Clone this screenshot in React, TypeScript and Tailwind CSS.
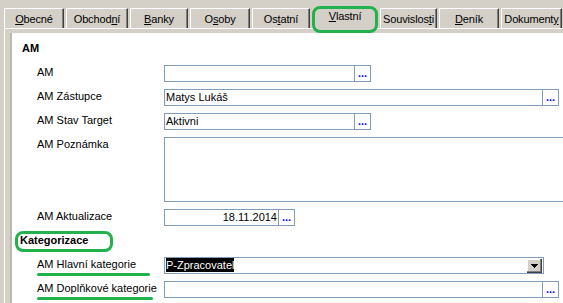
import React from 'react';

type TabDef = { w: number; text: string; u: number; selected?: boolean };

const tabs: TabDef[] = [
  { w: 60, text: 'Obecné', u: 0 },
  { w: 62, text: 'Obchodní', u: 6 },
  { w: 58, text: 'Banky', u: 0 },
  { w: 60, text: 'Osoby', u: 1 },
  { w: 58, text: 'Ostatní', u: 2 },
  { w: 66, text: 'Vlastní', u: 0, selected: true },
  { w: 57, text: 'Souvislosti', u: 9 },
  { w: 60, text: 'Deník', u: 0 },
  { w: 61, text: 'Dokumenty', u: 8 },
];

function Label({ t }: { t: TabDef }) {
  return (
    <span className="whitespace-nowrap tracking-[-0.15px]">
      {t.text.slice(0, t.u)}
      <u className="underline-offset-[1px]">{t.text[t.u]}</u>
      {t.text.slice(t.u + 1)}
    </span>
  );
}

function Tab({ t }: { t: TabDef }) {
  if (t.selected) {
    return (
      <div
        className="relative z-10 -mt-[2px] h-[27px] shrink-0 rounded-[8px] border-[3px] border-[#22b14c] bg-[#d4d0c8] text-center leading-[14px]"
        style={{ width: t.w }}
      >
        <Label t={t} />
      </div>
    );
  }
  return (
    <div
      className="flex h-[20px] shrink-0 items-center justify-center border-l border-t border-r border-l-white border-t-white border-r-[#404040] bg-[#d4d0c8] pt-[1px] leading-[14px] shadow-[inset_-1px_0_#808080]"
      style={{ width: t.w }}
    >
      <Label t={t} />
    </div>
  );
}

function Dots() {
  return (
    <div className="w-[16px] shrink-0 border-l border-[#7f9db9] text-center font-bold leading-[15px] text-[#0000ff]">
      ...
    </div>
  );
}

function Field({
  w,
  children,
  dots,
  right,
  combo,
}: {
  w: number;
  children?: React.ReactNode;
  dots?: boolean;
  right?: boolean;
  combo?: boolean;
}) {
  return (
    <div className="flex h-[17px] shrink-0 border border-[#7f9db9] bg-white" style={{ width: w }}>
      <div
        className={
          right
            ? 'flex-1 overflow-hidden whitespace-nowrap pr-[1px] text-right leading-[15px]'
            : 'flex-1 overflow-hidden whitespace-nowrap pl-[1px] leading-[15px]'
        }
      >
        {children}
      </div>
      {dots && <Dots />}
      {combo && (
        <div className="mr-[1px] mt-[1px] flex h-[14px] w-[15px] shrink-0 items-center justify-center border-b border-r border-[#404040] bg-[#d4d0c8] shadow-[inset_-1px_-1px_#808080,inset_1px_1px_#ffffff]">
          <svg width="7" height="4" viewBox="0 0 7 4">
            <path d="M0 0h7v1H0zM1 1h5v1H1zM2 2h3v1H2zM3 3h1v1H3z" fill="#000" />
          </svg>
        </div>
      )}
    </div>
  );
}

function Row({
  label,
  children,
  mark,
  className = '',
}: {
  label: string;
  children: React.ReactNode;
  mark?: number;
  className?: string;
}) {
  return (
    <div className={'flex items-start ' + className}>
      <div className="relative w-[152px] shrink-0 whitespace-nowrap pl-[25px] leading-[15px]">
        {label}
        {mark && (
          <div
            className="absolute left-[25px] top-[16px] h-[3px] rounded-full bg-[#22b14c]"
            style={{ width: mark }}
          />
        )}
      </div>
      {children}
    </div>
  );
}

export default function App() {
  return (
    <div
      className="relative h-[303px] w-[563px] overflow-hidden bg-[#d4d0c8] text-[11px] text-black"
      style={{ fontFamily: '"Liberation Sans", Arial, sans-serif' }}
    >
      <div className="flex h-[28px] items-start gap-[2px] pl-[4px] pt-[8px]">
        {tabs.map((t) => (
          <Tab key={t.text} t={t} />
        ))}
      </div>
      <div className="ml-[4px] h-[275px] border-l border-t border-white pl-[5px] pt-[4px]">
        <div className="h-full border-l-2 border-[#bdb9b1] bg-white">
          <div className="pl-[10px] pt-[8px] font-bold leading-[14px]">AM</div>
          <div className="mt-[10px] flex flex-col gap-[7px]">
            <Row label="AM">
              <Field w={207} dots />
            </Row>
            <Row label="AM Zástupce">
              <Field w={395} dots>
                Matys Lukáš
              </Field>
            </Row>
            <Row label="AM Stav Target">
              <Field w={207} dots>
                Aktivni
              </Field>
            </Row>
            <Row label="AM Poznámka">
              <div className="h-[65px] w-[402px] shrink-0 border border-[#7f9db9] bg-white" />
            </Row>
            <Row label="AM Aktualizace">
              <Field w={131} dots right>
                18.11.2014
              </Field>
            </Row>
          </div>
          <div className="ml-[3px] mt-[5px] h-[21px] w-[98px] rounded-[8px] border-[3px] border-[#22b14c] pl-[2px] font-bold leading-[13px]">
            Kategorizace
          </div>
          <div className="mt-[5px] flex flex-col gap-[7px]">
            <Row label="AM Hlavní kategorie" mark={113}>
              <Field w={380} combo>
                <span className="inline-block h-[14px] bg-black leading-[14px] text-white">P-Zpracovatel</span>
              </Field>
            </Row>
            <Row label="AM Doplňkové kategorie" mark={116}>
              <Field w={395} dots />
            </Row>
          </div>
        </div>
      </div>
    </div>
  );
}
